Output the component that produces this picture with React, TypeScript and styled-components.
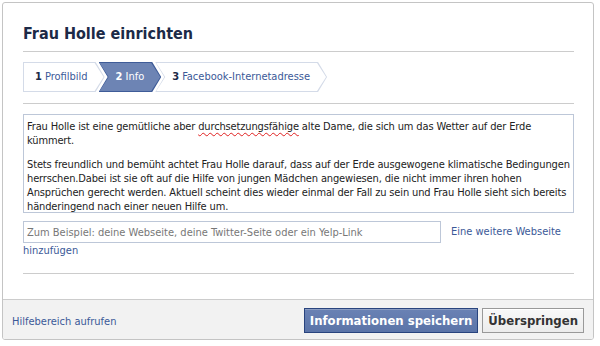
import React from 'react'
import styled, { createGlobalStyle } from 'styled-components'

const FONT = `"DejaVu Sans Condensed", "DejaVu Sans", Tahoma, sans-serif`

const GlobalStyle = createGlobalStyle`
  body {
    margin: 0;
    background: #fff;
    font-family: ${FONT};
    font-stretch: condensed;
    font-size: 11px;
    color: #333;
  }
`

const Panel = styled.div`
  box-sizing: border-box;
  margin: 2px;
  width: 592px;
  height: 338px;
  border: 1px solid #c4c4c4;
  border-radius: 3px;
  display: flex;
  flex-direction: column;
  overflow: hidden;
`

const Content = styled.div`
  padding: 0 19px 0 20px;
`

const Title = styled.h2`
  margin: 0;
  padding: 21px 0 7px;
  font-size: 16px;
  line-height: 20px;
  font-weight: bold;
  color: #1c2a47;
  border-bottom: 1px solid #ccc;
`

const Steps = styled.div`
  display: flex;
  padding: 10px 0 11px;
  border-bottom: 1px solid #ccc;
`

const Step = styled.div<{ $active?: boolean; $first?: boolean }>`
  position: relative;
  height: 30px;
  display: flex;
  align-items: center;
  gap: 3px;
  padding: 0 17px 0 ${({ $first }) => ($first ? '12px' : '17px')};
  margin-left: ${({ $first }) => ($first ? '0' : '-6px')};
  color: ${({ $active }) => ($active ? '#fff' : '#3b5998')};
  line-height: 14px;
  --shape: ${({ $first }) =>
    $first
      ? 'polygon(0 0, calc(100% - 9px) 0, 100% 50%, calc(100% - 9px) 100%, 0 100%)'
      : 'polygon(0 0, calc(100% - 9px) 0, 100% 50%, calc(100% - 9px) 100%, 0 100%, 9px 50%)'};

  &::before,
  &::after {
    content: '';
    position: absolute;
    clip-path: var(--shape);
  }
  &::before {
    inset: 0;
    background: ${({ $active }) => ($active ? '#3f5c98' : '#d4dbe8')};
  }
  &::after {
    inset: 1px;
    background: ${({ $active }) => ($active ? '#6d84b4' : '#fff')};
  }

  & > * {
    position: relative;
    z-index: 1;
  }
`

const StepNum = styled.b<{ $active?: boolean }>`
  color: ${({ $active }) => ($active ? '#fff' : '#1c2a47')};
`

const TextBox = styled.div`
  box-sizing: border-box;
  margin-top: 10px;
  height: 99px;
  padding: 5px 3px 0;
  border: 1px solid #bdc7d8;
  line-height: 14px;
  color: #222;
  letter-spacing: -0.14px;
  overflow: hidden;

  p {
    margin: 0 0 10px;
  }
  p:last-child {
    margin: 0;
  }
`

const Line = styled.span`
  display: block;
  white-space: nowrap;
`

const Misspelled = styled.span`
  text-decoration: underline wavy #e02020;
  text-decoration-thickness: 1px;
  text-underline-offset: 2px;
`

const LinkRow = styled.div`
  padding: 8px 0 15px;
  line-height: 15px;
  border-bottom: 1px solid #ccc;
`

const UrlInput = styled.input`
  box-sizing: border-box;
  width: 418px;
  height: 22px;
  margin: 0 10px 0 0;
  padding: 0 3px;
  border: 1px solid #bdc7d8;
  font-family: ${FONT};
  font-stretch: condensed;
  font-size: 11px;
  vertical-align: middle;
  outline: none;

  &::placeholder {
    color: #777;
  }
`

const Link = styled.a`
  color: #3b5998;
  text-decoration: none;
  cursor: pointer;
`

const Footer = styled.div`
  margin-top: auto;
  height: 40px;
  padding: 8px 9px 0 9px;
  box-sizing: border-box;
  display: flex;
  align-items: flex-start;
  background: #f2f2f2;
  border-top: 1px solid #ccc;
`

const HelpLink = styled(Link)`
  margin-top: 7px;
  margin-right: auto;
`

const Button = styled.button<{ $primary?: boolean }>`
  height: 25px;
  margin-left: 4px;
  padding: 0 ${({ $primary }) => ($primary ? '5px' : '5px')};
  font-family: ${FONT};
  font-stretch: condensed;
  font-size: 13px;
  font-weight: bold;
  cursor: pointer;
  color: ${({ $primary }) => ($primary ? '#fff' : '#333')};
  background: ${({ $primary }) =>
    $primary ? 'linear-gradient(#6a82b4, #5b74a8)' : 'linear-gradient(#f8f8f8, #ececec)'};
  border: 1px solid ${({ $primary }) => ($primary ? '#29447e' : '#999')};
  box-shadow: inset 0 1px 0 ${({ $primary }) => ($primary ? '#8a9cc2' : '#fff')};
`

const steps = [
  { n: 1, label: 'Profilbild' },
  { n: 2, label: 'Info', active: true },
  { n: 3, label: 'Facebook-Internetadresse' },
]

export default function App() {
  return (
    <>
      <GlobalStyle />
      <Panel>
        <Content>
          <Title>Frau Holle einrichten</Title>
          <Steps>
            {steps.map((s, i) => (
              <Step key={s.n} $first={i === 0} $active={s.active}>
                <StepNum $active={s.active}>{s.n}</StepNum>
                <span>{s.label}</span>
              </Step>
            ))}
          </Steps>
          <TextBox>
            <p>
              <Line>
                Frau Holle ist eine gemütliche aber <Misspelled>durchsetzungsfähige</Misspelled> alte Dame, die
                sich um das Wetter auf der Erde
              </Line>
              <Line>kümmert.</Line>
            </p>
            <p>
              <Line>
                Stets freundlich und bemüht achtet Frau Holle darauf, dass auf der Erde ausgewogene klimatische
                Bedingungen
              </Line>
              <Line>
                herrschen.Dabei ist sie oft auf die Hilfe von jungen Mädchen angewiesen, die nicht immer ihren hohen
              </Line>
              <Line>
                Ansprüchen gerecht werden. Aktuell scheint dies wieder einmal der Fall zu sein und Frau Holle sieht
                sich bereits
              </Line>
              <Line>händeringend nach einer neuen Hilfe um.</Line>
            </p>
          </TextBox>
          <LinkRow>
            <UrlInput placeholder="Zum Beispiel: deine Webseite, deine Twitter-Seite oder ein Yelp-Link" />
            <Link>Eine weitere Webseite hinzufügen</Link>
          </LinkRow>
        </Content>
        <Footer>
          <HelpLink>Hilfebereich aufrufen</HelpLink>
          <Button $primary>Informationen speichern</Button>
          <Button>Überspringen</Button>
        </Footer>
      </Panel>
    </>
  )
}
